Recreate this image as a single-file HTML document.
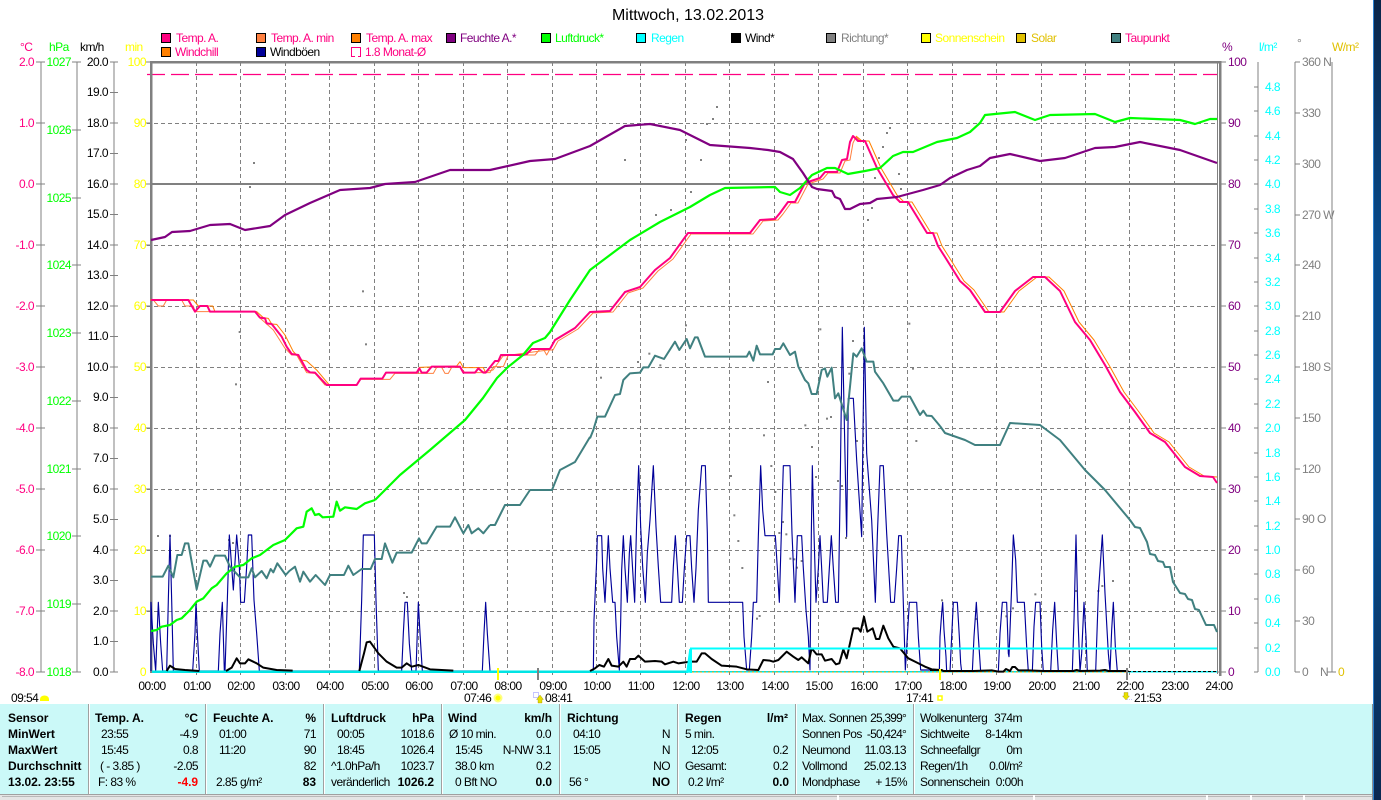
<!DOCTYPE html>
<html><head><meta charset="utf-8"><title>Mittwoch, 13.02.2013</title>
<style>
html,body{margin:0;padding:0;background:#fff;overflow:hidden}
svg{display:block;position:absolute;left:0;top:0}
text{font-family:"Liberation Sans",sans-serif;font-size:12px;letter-spacing:-.55px}
.b{font-weight:bold;letter-spacing:-.05px}
.e{text-anchor:end}
.m{text-anchor:middle}
.l{fill:none;stroke-linejoin:round}
.p text{fill:#000}
</style></head><body>
<svg width="1381" height="800" viewBox="0 0 1381 800">
<rect width="1381" height="800" fill="#fff"/>
<defs><linearGradient id="sb" x1="0" y1="0" x2="0" y2="1"><stop offset="0" stop-color="#0a2548"/><stop offset=".3" stop-color="#084a8a"/><stop offset=".65" stop-color="#084a88"/><stop offset="1" stop-color="#0a2850"/></linearGradient></defs>
<rect x="1373" y="0" width="8" height="800" fill="url(#sb)"/>
<rect x="1373" y="0" width="1" height="800" fill="#2a80d0"/>

<text x="688" y="20" class="m" style="font-size:16px;letter-spacing:0">Mittwoch, 13.02.2013</text>

<!-- legend -->
<g stroke="#000" stroke-width="1">
<rect x="161.500" y="33.500" width="9" height="9" fill="#ff0080"/>
<rect x="256.500" y="33.500" width="9" height="9" fill="#ff8040"/>
<rect x="351.500" y="33.500" width="9" height="9" fill="#ff8000"/>
<rect x="446.500" y="33.500" width="9" height="9" fill="#800080"/>
<rect x="541.500" y="33.500" width="9" height="9" fill="#00ff00"/>
<rect x="636.500" y="33.500" width="9" height="9" fill="#00ffff"/>
<rect x="731.500" y="33.500" width="9" height="9" fill="#000"/>
<rect x="826.500" y="33.500" width="9" height="9" fill="#808080"/>
<rect x="921.500" y="33.500" width="9" height="9" fill="#ffff00"/>
<rect x="1016.500" y="33.500" width="9" height="9" fill="#e0c000"/>
<rect x="1111.500" y="33.500" width="9" height="9" fill="#408080"/>
<rect x="161.500" y="47.500" width="9" height="9" fill="#ff8000"/>
<rect x="256.500" y="47.500" width="9" height="9" fill="#000099"/>
</g>
<path d="M355 56.500H351.500V47.500H360.500V56.500H358" fill="none" stroke="#ff0080"/>
<g style="letter-spacing:0">
<text x="176" y="42" fill="#ff0080">Temp. A.</text>
<text x="271" y="42" fill="#ff0080">Temp. A. min</text>
<text x="366" y="42" fill="#ff0080">Temp. A. max</text>
<text x="460" y="42" fill="#800080">Feuchte A.*</text>
<text x="555" y="42" fill="#00ff00">Luftdruck*</text>
<text x="651" y="42" fill="#00ffff">Regen</text>
<text x="745" y="42" fill="#000">Wind*</text>
<text x="841" y="42" fill="#808080">Richtung*</text>
<text x="935" y="42" fill="#ffff00">Sonnenschein</text>
<text x="1031" y="42" fill="#e0c000">Solar</text>
<text x="1125" y="42" fill="#ff0080">Taupunkt</text>
<text x="175" y="56" fill="#ff0080">Windchill</text>
<text x="270" y="56" fill="#000">Windböen</text>
<text x="365" y="56" fill="#ff0080">1.8 Monat-Ø</text>
</g>

<!-- axis headers -->
<text x="20" y="51" fill="#ff0080">°C</text>
<text x="49" y="51" fill="#00ff00">hPa</text>
<text x="80" y="51" fill="#000">km/h</text>
<text x="125" y="51" fill="#ffff00">min</text>
<text x="1222" y="51" fill="#800080">%</text>
<text x="1259" y="51" fill="#00ffff">l/m²</text>
<text x="1297" y="47" fill="#808080">°</text>
<text x="1332" y="51" fill="#e0c000">W/m²</text>

<!-- axis lines -->
<g stroke="#808080" stroke-width="1" shape-rendering="crispEdges" fill="none">
<path d="M41 62V672M36 62H45M36 123H45M36 184H45M36 245H45M36 306H45M36 367H45M36 428H45M36 489H45M36 550H45M36 611H45M36 672H45"/>
<path d="M77 62V672M72 62H81M72 130H81M72 198H81M72 265H81M72 333H81M72 401H81M72 469H81M72 536H81M72 604H81M72 672H81"/>
<path d="M114 62V672M110 62H118M110 92.500H118M110 123H118M110 153.500H118M110 184H118M110 214.500H118M110 245H118M110 275.500H118M110 306H118M110 336.500H118M110 367H118M110 397.500H118M110 428H118M110 458.500H118M110 489H118M110 519.500H118M110 550H118M110 580.500H118M110 611H118M110 641.500H118M110 672H118"/>
<path d="M1258 62V672M1254 87H1258M1254 111H1258M1254 136H1258M1254 160H1258M1254 184H1258M1254 209H1258M1254 233H1258M1254 258H1258M1254 282H1258M1254 306H1258M1254 331H1258M1254 355H1258M1254 379H1258M1254 404H1258M1254 428H1258M1254 453H1258M1254 477H1258M1254 501H1258M1254 526H1258M1254 550H1258M1254 574H1258M1254 599H1258M1254 623H1258M1254 648H1258M1254 672H1258"/>
<path d="M1295 62V672M1295 62H1300M1295 113H1300M1295 164H1300M1295 215H1300M1295 265H1300M1295 316H1300M1295 367H1300M1295 418H1300M1295 469H1300M1295 519H1300M1295 570H1300M1295 621H1300M1295 672H1300"/>
<path d="M1332 62V672M1327 672H1336"/>
<path d="M1221 62H1226M1221 123H1226M1221 184H1226M1221 245H1226M1221 306H1226M1221 367H1226M1221 428H1226M1221 489H1226M1221 550H1226M1221 611H1226M1221 672H1226"/>
<path d="M146 62H150M146 123H150M146 184H150M146 245H150M146 306H150M146 367H150M146 428H150M146 489H150M146 550H150M146 611H150"/>
</g>

<!-- axis labels -->
<g fill="#ff0080" class="e" text-anchor="end">
<text x="34" y="66" text-anchor="end">2.0</text><text x="34" y="127" text-anchor="end">1.0</text><text x="34" y="188" text-anchor="end">0.0</text><text x="34" y="249" text-anchor="end">-1.0</text><text x="34" y="310" text-anchor="end">-2.0</text><text x="34" y="371" text-anchor="end">-3.0</text><text x="34" y="432" text-anchor="end">-4.0</text><text x="34" y="493" text-anchor="end">-5.0</text><text x="34" y="554" text-anchor="end">-6.0</text><text x="34" y="615" text-anchor="end">-7.0</text><text x="34" y="676" text-anchor="end">-8.0</text>
</g>
<g fill="#00ff00">
<text x="71" y="66" class="e">1027</text><text x="71" y="134" class="e">1026</text><text x="71" y="202" class="e">1025</text><text x="71" y="269" class="e">1024</text><text x="71" y="337" class="e">1023</text><text x="71" y="405" class="e">1022</text><text x="71" y="473" class="e">1021</text><text x="71" y="540" class="e">1020</text><text x="71" y="608" class="e">1019</text><text x="71" y="676" class="e">1018</text>
</g>
<g fill="#000">
<text x="108" y="66" class="e">20.0</text><text x="108" y="96" class="e">19.0</text><text x="108" y="127" class="e">18.0</text><text x="108" y="157" class="e">17.0</text><text x="108" y="188" class="e">16.0</text><text x="108" y="218" class="e">15.0</text><text x="108" y="249" class="e">14.0</text><text x="108" y="279" class="e">13.0</text><text x="108" y="310" class="e">12.0</text><text x="108" y="340" class="e">11.0</text><text x="108" y="371" class="e">10.0</text><text x="108" y="401" class="e">9.0</text><text x="108" y="432" class="e">8.0</text><text x="108" y="462" class="e">7.0</text><text x="108" y="493" class="e">6.0</text><text x="108" y="523" class="e">5.0</text><text x="108" y="554" class="e">4.0</text><text x="108" y="584" class="e">3.0</text><text x="108" y="615" class="e">2.0</text><text x="108" y="645" class="e">1.0</text><text x="108" y="676" class="e">0.0</text>
</g>
<g fill="#ffff00">
<text x="146" y="66" class="e">100</text><text x="146" y="127" class="e">90</text><text x="146" y="188" class="e">80</text><text x="146" y="249" class="e">70</text><text x="146" y="310" class="e">60</text><text x="146" y="371" class="e">50</text><text x="146" y="432" class="e">40</text><text x="146" y="493" class="e">30</text><text x="146" y="554" class="e">20</text><text x="146" y="615" class="e">10</text><text x="146" y="676" class="e">0</text>
</g>
<g fill="#800080">
<text x="1228" y="66">100</text><text x="1228" y="127">90</text><text x="1228" y="188">80</text><text x="1228" y="249">70</text><text x="1228" y="310">60</text><text x="1228" y="371">50</text><text x="1228" y="432">40</text><text x="1228" y="493">30</text><text x="1228" y="554">20</text><text x="1228" y="615">10</text><text x="1228" y="676">0</text>
</g>
<g fill="#00ffff">
<text x="1265" y="91">4.8</text><text x="1265" y="115">4.6</text><text x="1265" y="140">4.4</text><text x="1265" y="164">4.2</text><text x="1265" y="188">4.0</text><text x="1265" y="213">3.8</text><text x="1265" y="237">3.6</text><text x="1265" y="262">3.4</text><text x="1265" y="286">3.2</text><text x="1265" y="310">3.0</text><text x="1265" y="335">2.8</text><text x="1265" y="359">2.6</text><text x="1265" y="383">2.4</text><text x="1265" y="408">2.2</text><text x="1265" y="432">2.0</text><text x="1265" y="457">1.8</text><text x="1265" y="481">1.6</text><text x="1265" y="505">1.4</text><text x="1265" y="530">1.2</text><text x="1265" y="554">1.0</text><text x="1265" y="578">0.8</text><text x="1265" y="603">0.6</text><text x="1265" y="627">0.4</text><text x="1265" y="652">0.2</text><text x="1265" y="676">0.0</text>
</g>
<g fill="#808080">
<text x="1302" y="66">360 N</text><text x="1302" y="117">330</text><text x="1302" y="168">300</text><text x="1302" y="219">270 W</text><text x="1302" y="269">240</text><text x="1302" y="320">210</text><text x="1302" y="371">180 S</text><text x="1302" y="422">150</text><text x="1302" y="473">120</text><text x="1302" y="523">90  O</text><text x="1302" y="574">60</text><text x="1302" y="625">30</text><text x="1302" y="676">0</text><text x="1320" y="676">N</text>
</g>
<text x="1338" y="676" fill="#e0c000">0</text>

<!-- grid -->
<g stroke="#808080" stroke-width="1" stroke-dasharray="4 3" fill="none" shape-rendering="crispEdges">
<path d="M196.500 62V676M240.500 62V676M285.500 62V676M329.500 62V676M374.500 62V676M418.500 62V676M463.500 62V676M507.500 62V676M552.500 62V676M596.500 62V676M640.500 62V676M685.500 62V676M729.500 62V676M774.500 62V676M818.500 62V676M863.500 62V676M907.500 62V676M952.500 62V676M996.500 62V676M1041.500 62V676M1085.500 62V676M1129.500 62V676M1174.500 62V676"/>
<path d="M147 123.500H1218M147 245.500H1218M147 306.500H1218M147 367.500H1218M147 428.500H1218M147 489.500H1218M147 550.500H1218M147 611.500H1218"/>
</g>
<path d="M147 74.500H1218" stroke="#ff0080" stroke-width="1.300" stroke-dasharray="18 6" fill="none"/>
<rect x="151" y="183" width="1067" height="2" fill="#808080"/>
<rect x="151" y="61" width="1070" height="2.500" fill="#808080"/>
<rect x="150" y="61" width="2.500" height="612" fill="#808080"/>
<rect x="1217" y="62" width="1" height="612" fill="#808080"/>
<rect x="1219" y="61" width="2.500" height="615" fill="#808080"/>
<g stroke="#808080" fill="none" shape-rendering="crispEdges"><path d="M1218 672H1226"/></g>

<!-- direction dots -->
<g fill="#808080">
<g transform="translate(590 320) scale(.33333)">
<rect x="285" y="13" width="6" height="6"/><rect x="175" y="98" width="6" height="6"/><rect x="141" y="123" width="6" height="6"/><rect x="208" y="133" width="6" height="6"/><rect x="30" y="170" width="6" height="6"/><rect x="531" y="183" width="6" height="6"/><rect x="966" y="143" width="6" height="6"/><rect x="775" y="158" width="6" height="6"/><rect x="708" y="293" width="6" height="6"/><rect x="720" y="288" width="6" height="6"/><rect x="643" y="313" width="6" height="6"/><rect x="519" y="343" width="6" height="6"/><rect x="976" y="360" width="6" height="6"/><rect x="798" y="360" width="6" height="6"/><rect x="663" y="378" width="6" height="6"/><rect x="675" y="468" width="6" height="6"/><rect x="541" y="435" width="6" height="6"/><rect x="553" y="513" width="6" height="6"/><rect x="420" y="465" width="6" height="6"/><rect x="741" y="480" width="6" height="6"/><rect x="753" y="495" width="6" height="6"/><rect x="430" y="583" width="6" height="6"/><rect x="576" y="603" width="6" height="6"/><rect x="565" y="636" width="6" height="6"/><rect x="586" y="640" width="6" height="6"/><rect x="765" y="651" width="6" height="6"/><rect x="442" y="660" width="6" height="6"/><rect x="598" y="713" width="6" height="6"/><rect x="610" y="715" width="6" height="6"/><rect x="632" y="720" width="6" height="6"/><rect x="618" y="740" width="6" height="6"/><rect x="454" y="741" width="6" height="6"/><rect x="506" y="885" width="6" height="6"/><rect x="498" y="893" width="6" height="6"/><rect x="786" y="60" width="6" height="6"/><rect x="688" y="25" width="6" height="6"/><rect x="955" y="8" width="6" height="6"/>
</g>
<g transform="translate(930 520) scale(.33333)">
<rect x="33" y="238" width="6" height="6"/><rect x="313" y="220" width="6" height="6"/><rect x="246" y="262" width="6" height="6"/><rect x="226" y="286" width="6" height="6"/><rect x="135" y="294" width="6" height="6"/><rect x="435" y="210" width="6" height="6"/><rect x="502" y="210" width="6" height="6"/><rect x="514" y="195" width="6" height="6"/><rect x="546" y="180" width="6" height="6"/>
</g>
<g transform="translate(150 280) scale(.33333)">
<rect x="636" y="31" width="6" height="6"/><rect x="266" y="153" width="6" height="6"/><rect x="645" y="190" width="6" height="6"/><rect x="255" y="310" width="6" height="6"/>
</g>
<rect x="716" y="106" width="2" height="2"/><rect x="712" y="118" width="2" height="2"/><rect x="706" y="123" width="2" height="2"/><rect x="889" y="127" width="2" height="2"/><rect x="886" y="132" width="2" height="2"/><rect x="882" y="146" width="2" height="2"/><rect x="878" y="157" width="2" height="2"/><rect x="898" y="173" width="2" height="2"/><rect x="874" y="177" width="2" height="2"/><rect x="900" y="188" width="2" height="2"/><rect x="871" y="207" width="2" height="2"/><rect x="867" y="219" width="2" height="2"/><rect x="253" y="162" width="2" height="2"/><rect x="249" y="186" width="2" height="2"/><rect x="157" y="535" width="2" height="2"/><rect x="169" y="535" width="2" height="2"/><rect x="228" y="539" width="2" height="2"/><rect x="232" y="542" width="2" height="2"/><rect x="403" y="592" width="2" height="2"/><rect x="406" y="596" width="2" height="2"/><rect x="418" y="604" width="2" height="2"/><rect x="624" y="159" width="2" height="2"/><rect x="655" y="214" width="2" height="2"/><rect x="670" y="209" width="2" height="2"/><rect x="685" y="139" width="2" height="2"/><rect x="690" y="191" width="2" height="2"/><rect x="700" y="159" width="2" height="2"/>
</g>

<!-- gusts -->
<g class="l" stroke="#000099">
<g transform="translate(140 500) scale(.33333)"><polyline stroke-width="3.400" fill="none" points="33,513 33,307 40,430 47,513 55,307 62,430 68,513 80,513 85,300 90,105 95,300 100,513 158,513 165,400 168,307 172,400 178,513 235,513 240,400 247,307 253,513 255,513 262,300 268,105 275,200 280,270 290,105 298,200 302,307 313,307 320,200 325,105 335,105 342,300 350,400 358,513 658,513 665,300 670,105 703,105 708,300 715,513 785,513 790,400 795,307 802,307 808,430 815,513 828,513 835,307 840,400 847,513 1027,513 1032,400 1037,307 1042,400 1050,513"/></g>
<g transform="translate(590 320) scale(.33333)"><polyline stroke-width="3.400" fill="none" points="0,1053 10,1053 12,900 20,720 22,647 35,647 38,745 45,847 50,745 55,647 60,745 68,847 75,847 80,950 88,1050 92,905 95,750 100,647 105,745 112,847 118,700 122,647 128,750 134,847 140,600 146,437 152,620 158,740 166,847 172,700 180,600 190,437 198,620 205,740 212,847 245,847 250,740 256,647 262,740 268,847 277,847 283,745 290,647 300,647 305,745 312,847 318,745 325,570 335,437 346,437 352,640 355,847 458,847 462,950 470,1050 478,1050 485,950 490,847 500,847 505,650 512,437 518,570 525,647 556,647 562,745 568,847 574,640 580,437 600,437 606,640 615,847 622,647 635,647 640,745 648,870 655,950 660,1050 664,640 667,437 672,640 678,847 685,745 690,647 695,745 700,847 712,847 718,745 724,647 730,745 737,847 745,847 750,540 757,22 762,260 770,650 775,235 790,235 800,420 815,650 823,22 830,400 845,600 856,847 862,647 870,437 880,437 890,640 902,847 913,847 920,745 926,647 934,647 940,850 946,1050 952,950 958,847 980,847 985,950 992,1050 1047,1050"/></g>
<g transform="translate(930 520) scale(.33333)"><polyline stroke-width="3.400" fill="none" points="28,455 30,350 35,280 38,247 42,330 48,410 50,455 60,455 65,350 70,247 82,247 88,350 92,430 95,455 127,455 132,350 139,247 145,350 152,455 205,455 210,340 217,247 230,247 235,400 237,410 245,200 250,45 257,120 262,247 283,247 290,380 295,455 307,455 312,320 317,247 330,247 335,380 340,455 362,455 368,330 374,247 380,370 385,455 427,455 432,300 438,45 444,300 450,455 455,400 462,247 468,350 472,455 497,455 505,220 517,45 525,220 535,400 540,455 545,330 550,247 556,380 562,455 595,455"/></g>
</g>

<!-- temperature min / max -->
<g class="l">
<polyline transform="translate(3 1)" stroke="#ff8040" stroke-width="1" points="480,371 490,369 500,355 545,349 550,349 555,340 575,328 590,312 610,311 625,292 640,287 655,270 670,258 688,233 750,233 760,220 775,219 780,213 788,202 795,202 805,183 820,178 825,172 837,172 842,160 847,159 850,142 853,136 858,141"/>
<polyline transform="translate(4 0)" stroke="#ff8000" stroke-width="1" points="852,136 858,141 865,141 877,168 893,195 900,202 908,202 927,233 933,233 938,246 945,257 960,281 970,290 985,312 1000,312 1015,291 1033,277 1045,277 1060,291 1075,322 1090,340 1105,365 1120,392 1135,412 1150,433 1165,442 1185,467 1200,476 1213,477"/>
<g transform="translate(150 280) scale(.33333)">
<polyline stroke="#ff8000" stroke-width="3" points="0,60 130,60 145,78 188,78 195,95 320,95 340,113 355,115 365,132 380,133 405,165 430,215 455,240 470,243 500,270 538,315 620,315 632,296 697,296 708,278 800,278 808,262 920,258 930,245 940,263 1000,263 1007,278 1035,243 1045,243 1053,225 1120,225 1130,222 1145,207 1200,207"/>
<polyline stroke="#ff8040" stroke-width="3" points="10,60 25,78 40,78 50,60 95,60 105,78 130,78 135,95 320,95 325,110 348,130 370,150 405,205 425,225 440,225 470,278 495,280 525,315 620,315 630,298 720,298 735,280 850,280 860,262 875,262 885,280 895,280 905,262 930,262 945,278 1020,278 1030,260 1060,260 1075,225 1125,225 1155,225 1170,207 1180,207 1190,225 1200,207"/>
</g>
</g>

<!-- temperature -->
<g class="l" stroke="#ff0080" stroke-width="2">
<g transform="translate(150 280) scale(.33333)"><polyline stroke-width="6" fill="none" points="3,60 115,60 135,95 150,78 172,78 180,95 315,95 330,113 345,115 350,130 365,132 395,170 410,200 425,222 445,225 470,270 480,277 495,278 530,315 620,315 632,296 697,296 708,278 800,278 808,265 815,278 830,278 845,260 930,260 940,278 975,278 985,265 1000,278 1007,278 1035,243 1045,243 1053,225 1120,225 1130,222 1145,207 1200,207"/></g>
<polyline fill="none" points="550,349 555,340 575,328 590,312 610,311 625,292 640,287 655,270 670,258 688,233 750,233 760,220 775,219 780,213 788,202 795,202 805,183 820,178 825,172 837,172 842,160 847,159 850,142 853,136 858,141 865,141 877,168 893,195 900,202 908,202 927,233 933,233 938,246 945,257 960,281 970,290 985,312 1000,312 1015,291 1033,277 1045,277 1060,291 1075,322 1090,340 1105,365 1120,392 1135,412 1150,433 1165,442 1185,467 1200,476 1213,477 1217,483"/>
</g>

<!-- pressure -->
<g class="l" stroke="#00ff00" stroke-width="2.200">
<g transform="translate(140 500) scale(.33333)"><polyline stroke-width="6.600" fill="none" points="33,393 50,390 65,380 90,375 110,360 125,355 150,330 170,305 190,295 215,265 230,255 260,220 285,200 310,195 335,175 360,165 400,135 435,120 470,85 490,80 500,35 515,25 525,45 537,42 548,52 580,50 590,5 600,32 615,22 650,27 675,10 705,0"/></g>
<polyline fill="none" points="375,500 385,490 400,475 430,450 465,420 483,398 497,378 508,367 523,355 533,343 545,338 550,332 570,300 590,270 610,255 630,240 660,222 690,207 710,195 725,188 775,187 780,192 790,195 800,188 812,175 827,168 835,168 848,174 865,171 880,168 893,156 903,152 913,152 937,142 957,138 970,132 980,123 985,115 1015,112 1035,120 1050,115 1095,114 1115,122 1130,118 1180,120 1195,124 1210,119 1217,119"/>
</g>

<!-- humidity -->
<polyline class="l" stroke="#800080" stroke-width="2.200" points="151,240 165,237 172,232 190,231 210,225 230,224 245,230 270,226 285,215 310,203 340,190 370,188 385,184 415,182 450,170 490,170 530,161 555,159 590,146 625,126 650,124 680,130 710,145 750,148 768,150 780,152 793,159 803,173 812,187 817,189 832,191 835,197 840,199 845,209 850,209 860,204 870,203 877,199 897,197 923,190 940,185 950,178 967,170 980,166 990,158 1010,154 1040,161 1065,158 1095,148 1115,147 1140,142 1180,150 1217,163"/>

<!-- dew point -->
<g class="l" stroke="#408080" stroke-width="2">
<g transform="translate(140 500) scale(.33333)"><polyline stroke-width="6" fill="none" points="33,230 68,230 85,197 100,232 112,165 125,165 135,130 145,130 170,268 190,182 200,182 210,200 225,167 255,167 270,200 300,232 325,232 335,205 345,232 365,213 380,235 392,207 400,217 412,190 437,225 448,213 465,200 480,245 490,215 510,245 527,225 555,255 570,225 612,225 625,197 640,225 665,207 692,207 705,177 725,177 735,130 757,188 770,158 815,158 837,115 845,130 860,130 890,80 930,80 945,52 970,100 985,75 995,100 1015,85 1030,100 1050,75"/></g>
<polyline fill="none" points="490,525 495,525 505,505 520,505 530,490 552,490 560,470 575,462 590,437"/>
<g transform="translate(590 320) scale(.33333)"><polyline stroke-width="6" fill="none" points="0,355 10,330 22,290 45,290 75,225 90,222 100,180 120,160 150,158 160,142 175,142 195,107 222,117 255,65 268,90 290,57 300,85 315,52 323,52 345,110 470,110 478,95 490,122 500,77 510,103 548,103 555,87 570,87 580,70 600,105 615,95 625,140 645,180 655,190 665,222 680,222 695,150 705,145 712,170 725,143 735,235 745,220 770,300 790,100 800,110 815,85 830,125 850,125 855,155 880,190 910,242 925,242 935,230 960,230 990,285 1000,272 1010,287 1025,288 1050,318"/></g>
<polyline fill="none" points="940,426 945,433 965,440 975,445 1000,445 1010,423 1040,425 1060,440 1085,470 1105,490 1130,520 1135,527 1140,528 1147,542 1150,554 1155,555 1158,561 1163,562 1165,567 1170,567 1173,582 1180,593 1185,594 1188,599 1192,600 1195,609 1199,610 1206,625 1214,625 1217,632"/>
</g>

<!-- rain baseline -->
<rect x="152" y="670.500" width="536" height="2.500" fill="#00e4e4"/>
<rect x="692" y="671" width="525" height="1.500" fill="#00e4e4"/>
<path d="M692 672H1128" stroke="#e0a000" stroke-width="1" stroke-dasharray="2 2" fill="none"/>

<!-- wind -->
<g class="l" stroke="#000" stroke-width="2">
<g transform="translate(140 500) scale(.33333)" stroke-width="6" fill="none">
<polyline points="80,513 90,497 105,507 135,510 178,513"/>
<polyline points="258,513 275,503 290,475 300,490 315,490 325,478 350,490 370,503 410,510 458,512"/>
<polyline points="658,513 672,460 680,427 690,425 715,460 740,485 770,503 785,503 800,490 815,500 835,495 870,508 940,512"/>
</g>
<g transform="translate(590 320) scale(.33333)"><polyline stroke-width="6" fill="none" points="0,1053 15,1045 28,1035 42,1040 55,1017 65,1037 85,1040 100,1025 110,1040 120,1017 135,1017 145,1007 165,1025 195,1023 215,1025 225,1033 250,1025 265,1030 285,1027 305,1025 320,1025 335,1000 345,1000 365,1017 395,1037 440,1040 470,1048 505,1050 520,1020 540,1022 550,1025 565,1020 590,995 610,1010 625,1020 635,1012 655,1030 665,985 680,1003 695,1003 705,1022 725,1017 738,1033 748,1030 760,988 770,1015 790,925 805,925 812,935 822,890 832,935 848,925 858,957 868,957 880,917 895,955 910,980 930,985 955,1015 975,1025 1005,1040 1025,1048 1050,1050"/></g>
<g transform="translate(930 520) scale(.33333)"><polyline stroke-width="6" fill="none" points="0,450 35,450 40,453 130,453 185,451 205,455 220,455 228,447 240,453 247,441 255,441 265,451 295,451 340,453 430,453 440,450 450,453 510,452 525,450 535,453 595,453"/></g>
</g>
<path d="M1128 671.500H1217" stroke="#000" stroke-width="1" stroke-dasharray="3 2" fill="none"/>

<!-- rain -->
<path d="M691 673V648.500H1217" stroke="#00ffff" stroke-width="2" fill="none"/>
<path d="M687 672L690 649V672Z" fill="#00ffff" stroke="#00ffff" stroke-width="1.500"/>

<!-- x labels -->
<g fill="#000" text-anchor="middle">
<text x="152" y="690">00:00</text><text x="197" y="690">01:00</text><text x="241" y="690">02:00</text><text x="286" y="690">03:00</text><text x="330" y="690">04:00</text><text x="375" y="690">05:00</text><text x="419" y="690">06:00</text><text x="464" y="690">07:00</text><text x="508" y="690">08:00</text><text x="553" y="690">09:00</text><text x="597" y="690">10:00</text><text x="641" y="690">11:00</text><text x="686" y="690">12:00</text><text x="730" y="690">13:00</text><text x="775" y="690">14:00</text><text x="819" y="690">15:00</text><text x="864" y="690">16:00</text><text x="908" y="690">17:00</text><text x="953" y="690">18:00</text><text x="997" y="690">19:00</text><text x="1042" y="690">20:00</text><text x="1086" y="690">21:00</text><text x="1130" y="690">22:00</text><text x="1175" y="690">23:00</text><text x="1219" y="690">24:00</text>
</g>

<!-- sun / moon marks -->
<text x="11" y="702">09:54</text>
<path d="M40 701V699A4.500 3.500 0 0 1 49 699V701Z" fill="#ffff00"/>
<rect x="497" y="668" width="2" height="12" fill="#ffff00"/>
<text x="464" y="702">07:46</text>
<circle cx="498" cy="698" r="3.500" fill="#ffff00" stroke="#ffff80" stroke-width="2"/>
<rect x="537" y="668" width="2" height="12" fill="#808080"/>
<text x="545" y="702">08:41</text>
<rect x="533.500" y="692.500" width="5" height="5" fill="none" stroke="#6060ff" stroke-width=".7" stroke-dasharray="1 1"/>
<path d="M540 695L543.500 699.500H542V703H538V699.500H536.500Z" fill="#e8e000" stroke="#807000" stroke-width=".3"/>
<rect x="939" y="669" width="2" height="11" fill="#ffff00"/>
<text x="906" y="702">17:41</text>
<rect x="938" y="696" width="4" height="4" fill="none" stroke="#ffff00" stroke-width="1.500"/>
<rect x="1126" y="668" width="2" height="12" fill="#808080"/>
<path d="M1124 692.500H1128V696H1129.500L1126 700L1122.500 696H1124Z" fill="#e8e000" stroke="#807000" stroke-width=".3"/>
<path d="M1127 699.500H1132" stroke="#c0c0ff" stroke-width="1" stroke-dasharray="1 1"/>
<text x="1134" y="702">21:53</text>

<!-- bottom panel -->
<rect x="0" y="704" width="1372" height="90" fill="#cbf9f8"/>
<rect x="1372" y="704" width="1" height="96" fill="#909090"/>
<g fill="#a0a0a0">
<rect x="88" y="704" width="1" height="90"/><rect x="205" y="704" width="1" height="90"/><rect x="323" y="704" width="1" height="90"/><rect x="441" y="704" width="1" height="90"/><rect x="559" y="704" width="1" height="90"/><rect x="677" y="704" width="1" height="90"/><rect x="795" y="704" width="1" height="90"/><rect x="913" y="704" width="1" height="90"/>
</g>
<g fill="#fff">
<rect x="89" y="704" width="1" height="90"/><rect x="206" y="704" width="1" height="90"/><rect x="324" y="704" width="1" height="90"/><rect x="442" y="704" width="1" height="90"/><rect x="560" y="704" width="1" height="90"/><rect x="678" y="704" width="1" height="90"/><rect x="796" y="704" width="1" height="90"/><rect x="914" y="704" width="1" height="90"/>
</g>
<rect x="0" y="794" width="1372" height="1" fill="#a0a0a0"/>
<rect x="0" y="795" width="1372" height="5" fill="#e4e4e4"/>
<rect x="2" y="796" width="1370" height="1" fill="#b8b8b8"/>
<g fill="#fff"><rect x="837" y="795" width="2" height="5"/><rect x="1033" y="795" width="2" height="5"/><rect x="1206" y="795" width="2" height="5"/><rect x="1250" y="795" width="2" height="5"/><rect x="1303" y="795" width="2" height="5"/></g>

<g class="p">
<text x="8" y="722" class="b">Sensor</text><text x="8" y="738" class="b">MinWert</text><text x="8" y="754" class="b">MaxWert</text><text x="8" y="770" class="b">Durchschnitt</text><text x="8" y="786" class="b">13.02. 23:55</text>

<text x="95" y="722" class="b">Temp. A.</text><text x="198" y="722" class="b e">°C</text>
<text x="101" y="738">23:55</text><text x="198" y="738" class="e">-4.9</text>
<text x="101" y="754">15:45</text><text x="198" y="754" class="e">0.8</text>
<text x="100" y="770">( - 3.85 )</text><text x="198" y="770" class="e">-2.05</text>
<text x="98" y="786">F: 83 %</text><text x="198" y="786" class="b e" style="fill:#ff0000">-4.9</text>

<text x="213" y="722" class="b">Feuchte A.</text><text x="316" y="722" class="b e">%</text>
<text x="219" y="738">01:00</text><text x="316" y="738" class="e">71</text>
<text x="219" y="754">11:20</text><text x="316" y="754" class="e">90</text>
<text x="316" y="770" class="e">82</text>
<text x="216" y="786">2.85 g/m²</text><text x="316" y="786" class="b e">83</text>

<text x="331" y="722" class="b">Luftdruck</text><text x="434" y="722" class="b e">hPa</text>
<text x="337" y="738">00:05</text><text x="434" y="738" class="e">1018.6</text>
<text x="337" y="754">18:45</text><text x="434" y="754" class="e">1026.4</text>
<text x="331" y="770">^1.0hPa/h</text><text x="434" y="770" class="e">1023.7</text>
<text x="331" y="786">veränderlich</text><text x="434" y="786" class="b e">1026.2</text>

<text x="448" y="722" class="b">Wind</text><text x="552" y="722" class="b e">km/h</text>
<text x="449" y="738">Ø 10 min.</text><text x="551" y="738" class="e">0.0</text>
<text x="455" y="754">15:45</text><text x="551" y="754" class="e">N-NW 3.1</text>
<text x="455" y="770">38.0 km</text><text x="551" y="770" class="e">0.2</text>
<text x="455" y="786">0 Bft NO</text><text x="552" y="786" class="b e">0.0</text>

<text x="567" y="722" class="b">Richtung</text>
<text x="573" y="738">04:10</text><text x="670" y="738" class="e">N</text>
<text x="573" y="754">15:05</text><text x="670" y="754" class="e">N</text>
<text x="670" y="770" class="e">NO</text>
<text x="569" y="786">56 °</text><text x="670" y="786" class="b e">NO</text>

<text x="685" y="722" class="b">Regen</text><text x="788" y="722" class="b e">l/m²</text>
<text x="685" y="738">5 min.</text>
<text x="691" y="754">12:05</text><text x="788" y="754" class="e">0.2</text>
<text x="685" y="770">Gesamt:</text><text x="788" y="770" class="e">0.2</text>
<text x="688" y="786">0.2 l/m²</text><text x="789" y="786" class="b e">0.0</text>

<text x="802" y="722">Max. Sonnen</text><text x="906" y="722" class="e" style="letter-spacing:-.8px">25,399°</text>
<text x="802" y="738">Sonnen Pos</text><text x="906" y="738" class="e" style="letter-spacing:-.8px">-50,424°</text>
<text x="802" y="754">Neumond</text><text x="906" y="754" class="e">11.03.13</text>
<text x="802" y="770">Vollmond</text><text x="906" y="770" class="e">25.02.13</text>
<text x="802" y="786">Mondphase</text><text x="907" y="786" class="e">+ 15%</text>

<text x="920" y="722">Wolkenunterg</text><text x="1022" y="722" class="e">374m</text>
<text x="920" y="738">Sichtweite</text><text x="1022" y="738" class="e">8-14km</text>
<text x="920" y="754">Schneefallgr</text><text x="1022" y="754" class="e">0m</text>
<text x="920" y="770">Regen/1h</text><text x="1022" y="770" class="e">0.0l/m²</text>
<text x="920" y="786">Sonnenschein</text><text x="1023" y="786" class="e">0:00h</text>
</g>
</svg>
</body></html>
